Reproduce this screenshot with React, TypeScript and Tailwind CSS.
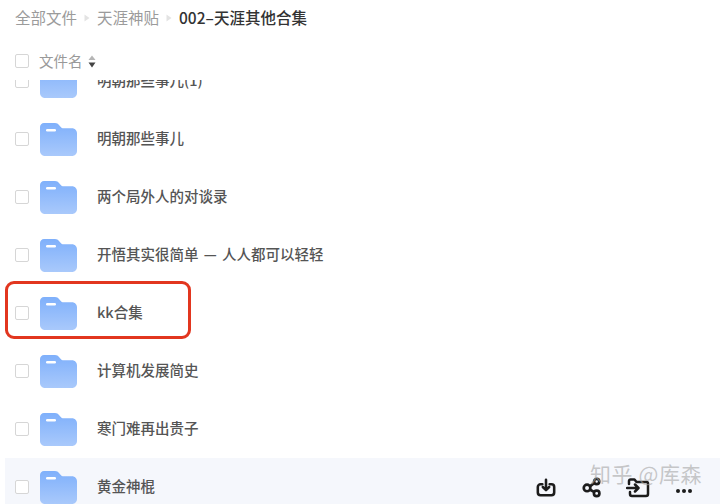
import React from "react";

const font = { fontFamily: '"Noto Sans CJK SC", "Liberation Sans", sans-serif' };

function Folder() {
  return (
    <svg width="37" height="33" viewBox="0 0 37 33" className="shrink-0">
      <defs>
        <linearGradient id="fg" x1="0" y1="0" x2="0" y2="1">
          <stop offset="0" stopColor="#7fb0fb" />
          <stop offset="1" stopColor="#a9c9fb" />
        </linearGradient>
      </defs>
      <path d="M4 0h11c2 0 3 .8 4.2 2.2L21 4.2c.7.8 1.2 1 2.2 1H32c2.800 0 5 2.200 5 5V28c0 2.800-2.200 5-5 5H5c-2.800 0-5-2.200-5-5V4c0-2.200 1.800-4 4-4z" fill="url(#fg)" />
      <rect x="6" y="6" width="10" height="2.500" rx="1.200" fill="#fff" />
    </svg>
  );
}

function Check() {
  return <div className="w-[14px] h-[14px] rounded-[2px] border border-[#d6d6d6] bg-white shrink-0" />;
}

function Row({ name, active }: { name: string; active?: boolean }) {
  return (
    <div className={`h-[58px] flex items-center ml-[5px] pl-[10px] shrink-0 ${active ? "bg-[#f5f7fc]" : ""}`}>
      <Check />
      <div className="ml-[11px]"><Folder /></div>
      <div className="ml-[20px] mb-[2px] text-[14.500px] font-medium text-[#555] whitespace-nowrap [word-spacing:2px]">{name}</div>
      {active && (
        <div className="ml-auto mr-[28px] flex items-center text-[#1c1c1c]">
          <svg width="20" height="24" viewBox="0 0 22 24" fill="none" stroke="currentColor" strokeWidth="2.800" strokeLinecap="round" strokeLinejoin="round">
            <path d="M7 9H5a3 3 0 0 0-3 3v6a3 3 0 0 0 3 3h12a3 3 0 0 0 3-3v-6a3 3 0 0 0-3-3h-2" />
            <path d="M11 4v11M7.500 12l3.500 3.500 3.500-3.500" />
          </svg>
          <svg width="22" height="24" viewBox="0 0 24 24" fill="none" stroke="currentColor" strokeWidth="2.900" className="ml-[26px]">
            <circle cx="5.500" cy="13" r="3.600" />
            <circle cx="16" cy="6" r="2.800" />
            <circle cx="16" cy="19" r="3" />
            <path d="M9 11l4.500-3.500M9 15l4.500 2.500" />
          </svg>
          <svg width="24" height="24" viewBox="0 0 24 24" fill="none" stroke="currentColor" strokeWidth="2.500" strokeLinecap="round" strokeLinejoin="round" className="ml-[22px]">
            <path d="M3 9V6a1.500 1.500 0 0 1 1.500-1.500h4l2 2.500h10a1.500 1.500 0 0 1 1.500 1.500V19a2 2 0 0 1-2 2H6a2 2 0 0 1-2-2v-2" />
            <path d="M1 13h11M9 9.500l3.500 3.500L9 16.500" />
          </svg>
          <div className="flex gap-[2px] ml-[26px] mt-[7px]">
            <span className="w-[4px] h-[4px] rounded-full bg-[#1c1c1c]" />
            <span className="w-[4px] h-[4px] rounded-full bg-[#1c1c1c]" />
            <span className="w-[4px] h-[4px] rounded-full bg-[#1c1c1c]" />
          </div>
        </div>
      )}
    </div>
  );
}

function Tri() {
  return (
    <svg width="6" height="8" viewBox="0 0 6 8" className="mx-[7px]"><path d="M0.500 0.500L5.500 4L0.500 7.500z" fill="#e3e3e3" /></svg>
  );
}

export default function App() {
  const rows = [
    "明朝那些事儿(1)",
    "明朝那些事儿",
    "两个局外人的对谈录",
    "开悟其实很简单 — 人人都可以轻轻",
    "kk合集",
    "计算机发展简史",
    "寒门难再出贵子",
  ];
  return (
    <div className="relative w-[720px] h-[504px] overflow-hidden bg-white flex flex-col" style={font}>
      <div className="h-[36px] flex items-center pl-[15px] pb-[1px] text-[15.500px] shrink-0">
        <span className="text-[#9b9b9b]">全部文件</span>
        <Tri />
        <span className="text-[#9b9b9b]">天涯神贴</span>
        <Tri />
        <span className="text-[#333] font-medium">002–天涯其他合集</span>
      </div>
      <div className="h-[44px] flex items-center pl-[15px] pt-[6px] shrink-0">
        <Check />
        <span className="ml-[10px] text-[14.500px] text-[#999]">文件名</span>
        <svg width="8" height="13" viewBox="0 0 8 13" className="ml-[5px]">
          <path d="M4 0.500L7.500 5H0.500z" fill="#b5b5b5" />
          <path d="M4 12.500L7.500 7.500H0.500z" fill="#444" />
        </svg>
      </div>
      <div className="flex-1 overflow-hidden">
        <div className="-mt-[28px] flex flex-col">
          {rows.map((r) => <Row key={r} name={r} />)}
          <Row name="黄金神棍" active />
        </div>
      </div>
      <div className="absolute left-[5px] top-[281px] w-[186px] h-[58px] border-[3.500px] border-[#e2361f] rounded-[9px]" />
      <div className="absolute left-[590px] top-[459px] text-[21px] leading-[28px] tracking-[0.6px] whitespace-nowrap text-[#a5a5a5]/60">知乎 @库森</div>
    </div>
  );
}
